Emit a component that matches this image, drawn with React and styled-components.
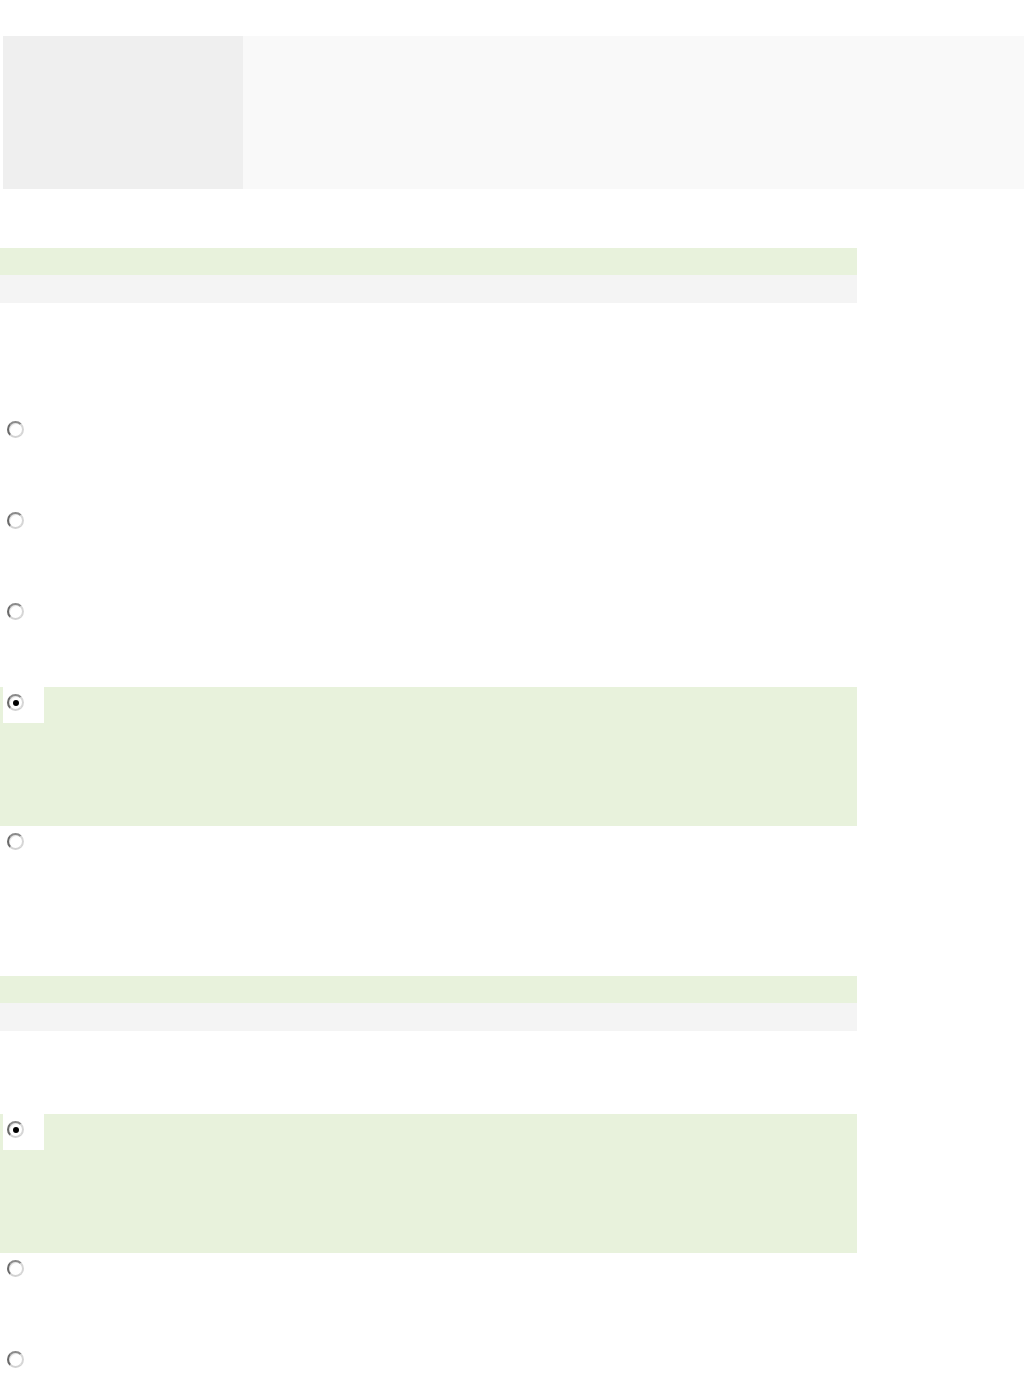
import React from "react";
import styled, { createGlobalStyle } from "styled-components";

const GlobalStyle = createGlobalStyle`
  html, body {
    margin: 0;
    padding: 0;
    background: #fff;
    font-family: "Liberation Sans", Arial, sans-serif;
  }
`;

const Page = styled.main`
  width: 1024px;
  padding-top: 36px;
`;

const Banner = styled.header`
  display: flex;
  height: 153px;
  margin-left: 3px;
`;

const BannerLogo = styled.div`
  width: 240px;
  background: #efefef;
`;

const BannerBody = styled.div`
  flex: 1;
  background: #f9f9f9;
`;

const Question = styled.section`
  width: 857px;
  margin-top: 59px;
`;

const QuestionTitle = styled.div`
  height: 27px;
  background: #e8f2dc;
`;

const QuestionInfo = styled.div`
  height: 28px;
  background: #f4f4f4;
`;

const QuestionText = styled.div`
  height: ${(props) => props.$height}px;
`;

const Option = styled.label`
  display: block;
  height: ${(props) => (props.$checked ? 139 : 91)}px;
  background: ${(props) => (props.$checked ? "#e8f2dc" : "transparent")};
`;

const RadioCell = styled.span`
  display: flex;
  align-items: flex-start;
  width: 41px;
  height: 36px;
  margin-left: 3px;
  padding: 7px 0 0 4px;
  box-sizing: border-box;
  background: ${(props) => (props.$checked ? "#fff" : "transparent")};
`;

const Radio = styled.span`
  position: relative;
  width: 17px;
  height: 17px;
  box-sizing: border-box;
  border-radius: 50%;
  border: 2px solid;
  border-color: #8a8a8a #d6d6d6 #d2d2d2 #6a6a6a;
  background: #fff;
  box-shadow: inset 1px 1px 0 #e6e6e6;

  &::after {
    content: "";
    display: ${(props) => (props.$checked ? "block" : "none")};
    position: absolute;
    left: 3.5px;
    top: 3.5px;
    width: 6px;
    height: 6px;
    border-radius: 50%;
    background: #000;
  }
`;

const questions = [
  { spacer: 111, options: [false, false, false, true, false] },
  { spacer: 83, options: [true, false, false] },
];

export default function App() {
  return (
    <>
      <GlobalStyle />
      <Page>
        <Banner>
          <BannerLogo />
          <BannerBody />
        </Banner>
        {questions.map((q, qi) => (
          <Question key={qi}>
            <QuestionTitle />
            <QuestionInfo />
            <QuestionText $height={q.spacer} />
            {q.options.map((checked, oi) => (
              <Option key={oi} $checked={checked}>
                <RadioCell $checked={checked}>
                  <Radio $checked={checked} />
                </RadioCell>
              </Option>
            ))}
          </Question>
        ))}
      </Page>
    </>
  );
}
